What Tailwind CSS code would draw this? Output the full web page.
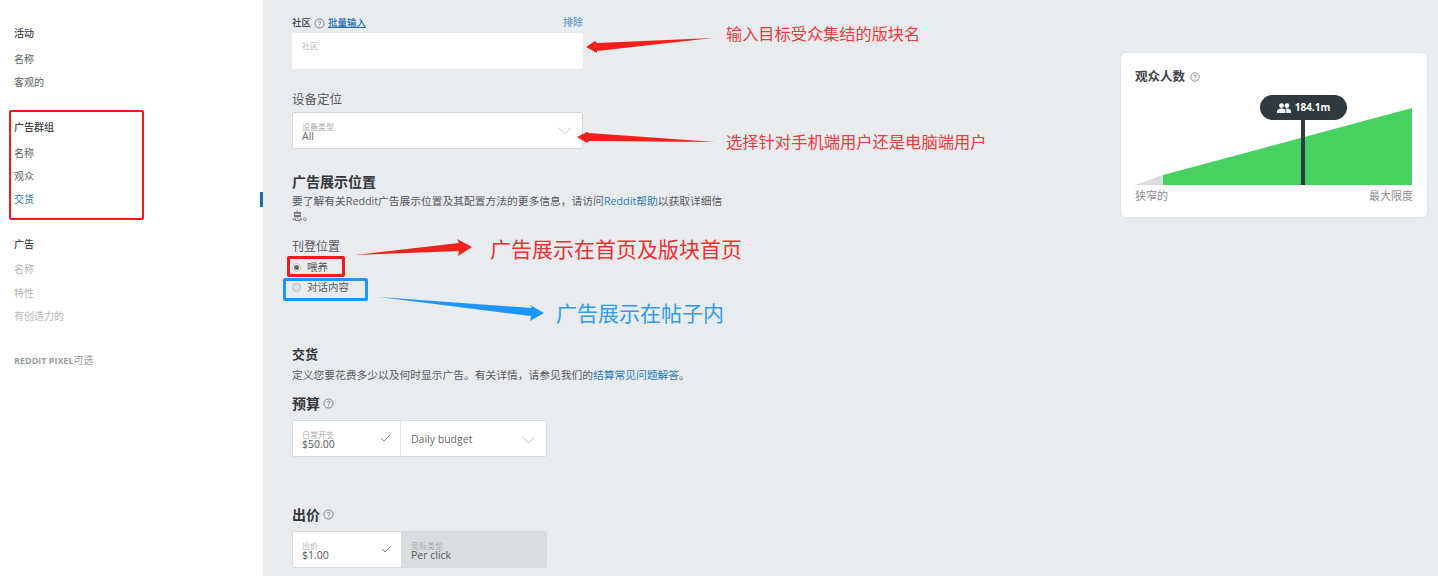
<!DOCTYPE html>
<html>
<head>
<title>Reddit Ads</title>
<meta charset="utf-8"/>
<script src="https://cdn.jsdelivr.net/npm/@tailwindcss/browser@4"></script>
</head>
<body class="bg-[#e9ecef] overflow-hidden font-['Open_Sans','Noto_Sans_CJK_SC',sans-serif]">
<div class="relative flex w-[1438px] h-[576px] overflow-hidden">

    <!-- left nav -->
    <div class="relative w-[263px] shrink-0 h-full bg-white pl-[14px] pt-[25px] text-[10px] leading-4 text-[#5a5f63]">
        <div class="font-medium text-[#3d4347]">活动</div>
        <div class="mt-[10px]">名称</div>
        <div class="mt-[7px]">客观的</div>
        <div class="mt-[29px] font-medium text-[#3d4347]">广告群组</div>
        <div class="mt-[10px]">名称</div>
        <div class="mt-[7px]">观众</div>
        <div class="mt-[7px] text-[#2a7bbf]">交货</div>
        <div class="mt-[29px] font-medium text-[#3d4347]">广告</div>
        <div class="mt-[9px] text-[#b3b6b9]">名称</div>
        <div class="mt-[8px] text-[#b3b6b9]">特性</div>
        <div class="mt-[7px] text-[#b3b6b9]">有创造力的</div>
        <div class="mt-[28px] text-[#9a9da0]"><span class="font-bold text-[9px]">REDDIT PIXEL</span>可选</div>
        <div class="absolute right-0 top-[192px] w-[3px] h-[15px] bg-[#1a6fb5]"></div>
    </div>

    <!-- form column -->
    <div class="w-[440px] shrink-0 ml-[29px] text-[#4a4f53]">
        <div class="w-[291px] flex items-end justify-between h-[30px] text-[10px] leading-[14px]">
            <div class="flex items-center gap-[3px]">
                <span class="text-[9.5px] font-medium text-[#3d4347]">社区</span>
                <svg class="w-[11px] h-[11px] text-[#777]" viewBox="0 0 12 12" fill="none" stroke="currentColor"><circle cx="6" cy="6" r="5"/><path d="M4.6 4.8a1.4 1.4 0 1 1 2 1.3c-.4.2-.6.5-.6 1"/><path d="M6 8.4v.8"/></svg>
                <span class="text-[9.5px] font-medium text-[#1a6fb5] underline">批量输入</span>
            </div>
            <span class="text-[#4a8cc4] mb-[1px]">排除</span>
        </div>
        <div class="mt-[3px] w-[291px] h-[36px] bg-white rounded-[2px] pl-[10px] pt-[7px] text-[8px] leading-3 text-[#b4b7ba]">社区</div>

        <div class="mt-[22px] text-[12.5px] leading-[18px] text-[#55595d]">设备定位</div>
        <div class="mt-[3px] w-[291px] h-[37px] bg-white rounded-[2px] border border-[#d5d8db] pl-[9px] pr-[11px] flex items-center justify-between">
            <div class="pt-[3px]">
                <div class="text-[8px] leading-[8px] text-[#a8abae]">设备类型</div>
                <div class="text-[10.5px] leading-[11px] text-[#666a6e]">All</div>
            </div>
            <svg class="w-[13px] h-[8px] text-[#c6c9cc]" viewBox="0 0 13 8" fill="none" stroke="currentColor"><path d="M.5 .8 6.5 7 12.5 .8"/></svg>
        </div>

        <div class="mt-[23px] text-[14px] leading-5 font-bold text-[#32373b]">广告展示位置</div>
        <div class="mt-[2px] w-[432px] text-[10.75px] leading-[15px] text-[#55595d]">要了解有关Reddit广告展示位置及其配置方法的更多信息，请访问<span class="text-[#2a7bbf]">Reddit帮助</span>以获取详细信息。</div>

        <div class="mt-[14px] text-[12px] leading-[18px] text-[#55595d]">刊登位置</div>
        <div class="mt-[2px] flex items-center gap-[6px] h-[20px] text-[10.5px] text-[#55595d]">
            <span class="w-[9px] h-[9px] mb-[2px] rounded-full border border-[#bbb] bg-white flex items-center justify-center"><span class="w-[5px] h-[5px] rounded-full bg-[#666]"></span></span>
            <span>喂养</span>
        </div>
        <div class="flex items-center gap-[6px] h-[20px] text-[10.5px] text-[#55595d]">
            <span class="w-[9px] h-[9px] mb-[2px] rounded-full border border-[#bbb] bg-[#dfe1e3]"></span>
            <span>对话内容</span>
        </div>

        <div class="mt-[47px] text-[13px] leading-[18px] font-bold text-[#32373b]">交货</div>
        <div class="mt-[5px] text-[10.75px] leading-[15px] text-[#55595d]">定义您要花费多少以及何时显示广告。有关详情，请参见我们的<span class="text-[#2a7bbf]">结算常见问题解答</span>。</div>

        <div class="mt-[10px] flex items-center gap-[3px] h-[20px]">
            <span class="text-[14px] font-bold text-[#32373b]">预算</span>
            <svg class="w-[11px] h-[11px] text-[#777]" viewBox="0 0 12 12" fill="none" stroke="currentColor"><circle cx="6" cy="6" r="5"/><path d="M4.6 4.8a1.4 1.4 0 1 1 2 1.3c-.4.2-.6.5-.6 1"/><path d="M6 8.4v.8"/></svg>
        </div>
        <div class="mt-[7px] w-[255px] h-[37px] bg-white rounded-[2px] border border-[#d8dbde] flex">
            <div class="w-[108px] pl-[9px] pr-[9px] border-r border-[#e2e4e6] flex items-center justify-between">
                <div class="pt-[3px]">
                    <div class="text-[8px] leading-[8px] text-[#a8abae]">日常开支</div>
                    <div class="text-[10.5px] leading-[11px] text-[#55595d]">$50.00</div>
                </div>
                <svg class="w-[11px] h-[8px] mb-[2px] text-[#6b8fae]" viewBox="0 0 11 8" fill="none" stroke="currentColor"><path d="M1 4 4 7 10 1"/></svg>
            </div>
            <div class="flex-1 pl-[10px] pr-[11px] pt-[2px] flex items-center justify-between text-[10.5px] text-[#666a6e]">
                <span>Daily budget</span>
                <svg class="w-[13px] h-[8px] text-[#c6c9cc]" viewBox="0 0 13 8" fill="none" stroke="currentColor"><path d="M.5 .8 6.5 7 12.5 .8"/></svg>
            </div>
        </div>

        <div class="mt-[47px] flex items-center gap-[3px] h-[20px]">
            <span class="text-[14px] font-bold text-[#32373b]">出价</span>
            <svg class="w-[11px] h-[11px] text-[#777]" viewBox="0 0 12 12" fill="none" stroke="currentColor"><circle cx="6" cy="6" r="5"/><path d="M4.6 4.8a1.4 1.4 0 1 1 2 1.3c-.4.2-.6.5-.6 1"/><path d="M6 8.4v.8"/></svg>
        </div>
        <div class="mt-[7px] w-[255px] h-[37px] bg-white rounded-[2px] border border-[#d8dbde] flex">
            <div class="w-[108px] pl-[9px] pr-[9px] flex items-center justify-between">
                <div class="pt-[3px]">
                    <div class="text-[8px] leading-[8px] text-[#a8abae]">出价</div>
                    <div class="text-[10.5px] leading-[11px] text-[#55595d]">$1.00</div>
                </div>
                <svg class="w-[11px] h-[8px] mb-[2px] text-[#6b8fae]" viewBox="0 0 11 8" fill="none" stroke="currentColor"><path d="M1 4 4 7 10 1"/></svg>
            </div>
            <div class="flex-1 pl-[10px] pt-[3px] bg-[#dadddf] flex flex-col justify-center">
                <div class="text-[8px] leading-[8px] text-[#a8abae]">竞标类型</div>
                <div class="text-[10.5px] leading-[11px] text-[#55595d]">Per click</div>
            </div>
        </div>
    </div>

    <!-- audience card -->
    <div class="ml-[388px] mt-[52px] w-[308px] h-[166px] shrink-0 bg-white rounded-[6px] border border-[#e1e4e7] px-[14px] pt-[14px]">
        <div class="flex items-center gap-[5px] h-[20px]">
            <span class="text-[12.5px] font-bold text-[#3d4347]">观众人数</span>
            <svg class="w-[10px] h-[10px] text-[#777]" viewBox="0 0 12 12" fill="none" stroke="currentColor"><circle cx="6" cy="6" r="5"/><path d="M4.6 4.8a1.4 1.4 0 1 1 2 1.3c-.4.2-.6.5-.6 1"/><path d="M6 8.4v.8"/></svg>
        </div>
        <div class="relative mt-[7px] h-[91px]">
            <svg class="absolute inset-0 w-[277px] h-[91px]" viewBox="0 0 277 91">
                <polygon points="0,91 28,81 28,91" fill="#dcdcdc"/>
                <polygon points="28,81 277,14 277,91 28,91" fill="#46d160"/>
                <rect x="166" y="20" width="4" height="71" fill="#2f3a3e"/>
            </svg>
            <div class="absolute left-[125px] top-[1px] w-[87px] h-[25px] rounded-full bg-[#2f3a3e] flex items-center justify-center gap-[4px] text-white text-[10px] font-bold">
                <svg class="w-[14px] h-[10px]" viewBox="0 0 14 10" fill="currentColor"><circle cx="4.5" cy="2.6" r="2.4"/><circle cx="10" cy="2.6" r="2.4"/><path d="M0 10V8.4C0 6.6 2 5.6 4.5 5.6S8.6 6.6 8.6 8.4V10Z"/><path d="M9.4 10V8c0-1-.4-1.7-1-2.2.5-.1 1-.2 1.6-.2 2.2 0 4 1 4 2.8V10Z"/></svg>
                <span>184.1m</span>
            </div>
        </div>
        <div class="mt-[4px] flex justify-between text-[11px] leading-[14px] text-[#8a8e92]">
            <span>狭窄的</span>
            <span>最大限度</span>
        </div>
    </div>

    <!-- annotations drawn over the screenshot -->
    <div class="absolute left-[9px] top-[110px] w-[135px] h-[110px] border-2 border-[#ee1c1c] rounded-[2px]"></div>
    <div class="absolute left-[287px] top-[256px] w-[58px] h-[21px] border-[3px] border-[#ee1c1c] rounded-[2px]"></div>
    <div class="absolute left-[283px] top-[278px] w-[85px] h-[23px] border-[3px] border-[#1e96ff] rounded-[2px]"></div>
    <svg class="absolute left-0 top-0 w-[1438px] h-[576px]" viewBox="0 0 1438 576">
        <polygon points="713,38 597,43 595,41 586,47 597,53 597,51" fill="#f5201c"/>
        <polygon points="715,142 589,133 587,132 577,137 587,143 589,141" fill="#f5201c"/>
        <polygon points="355,255 459,243 457,239 472,247 458,256 459,251" fill="#f5201c"/>
        <polygon points="379,297 532,308 530,305 544,313 530,321 531,316" fill="#1e96ff"/>
    </svg>
    <span class="absolute left-[726px] top-[22px] text-[16.2px] leading-6 text-[#f03a3a] whitespace-nowrap">输入目标受众集结的版块名</span>
    <span class="absolute left-[726px] top-[130px] text-[16.3px] leading-6 text-[#f03a3a] whitespace-nowrap">选择针对手机端用户还是电脑端用户</span>
    <span class="absolute left-[490px] top-[234px] text-[21px] leading-[30px] text-[#f03030] whitespace-nowrap">广告展示在首页及版块首页</span>
    <span class="absolute left-[556px] top-[298px] text-[21px] leading-[30px] text-[#2e9bf0] whitespace-nowrap">广告展示在帖子内</span>
</div>
</body>
</html>
